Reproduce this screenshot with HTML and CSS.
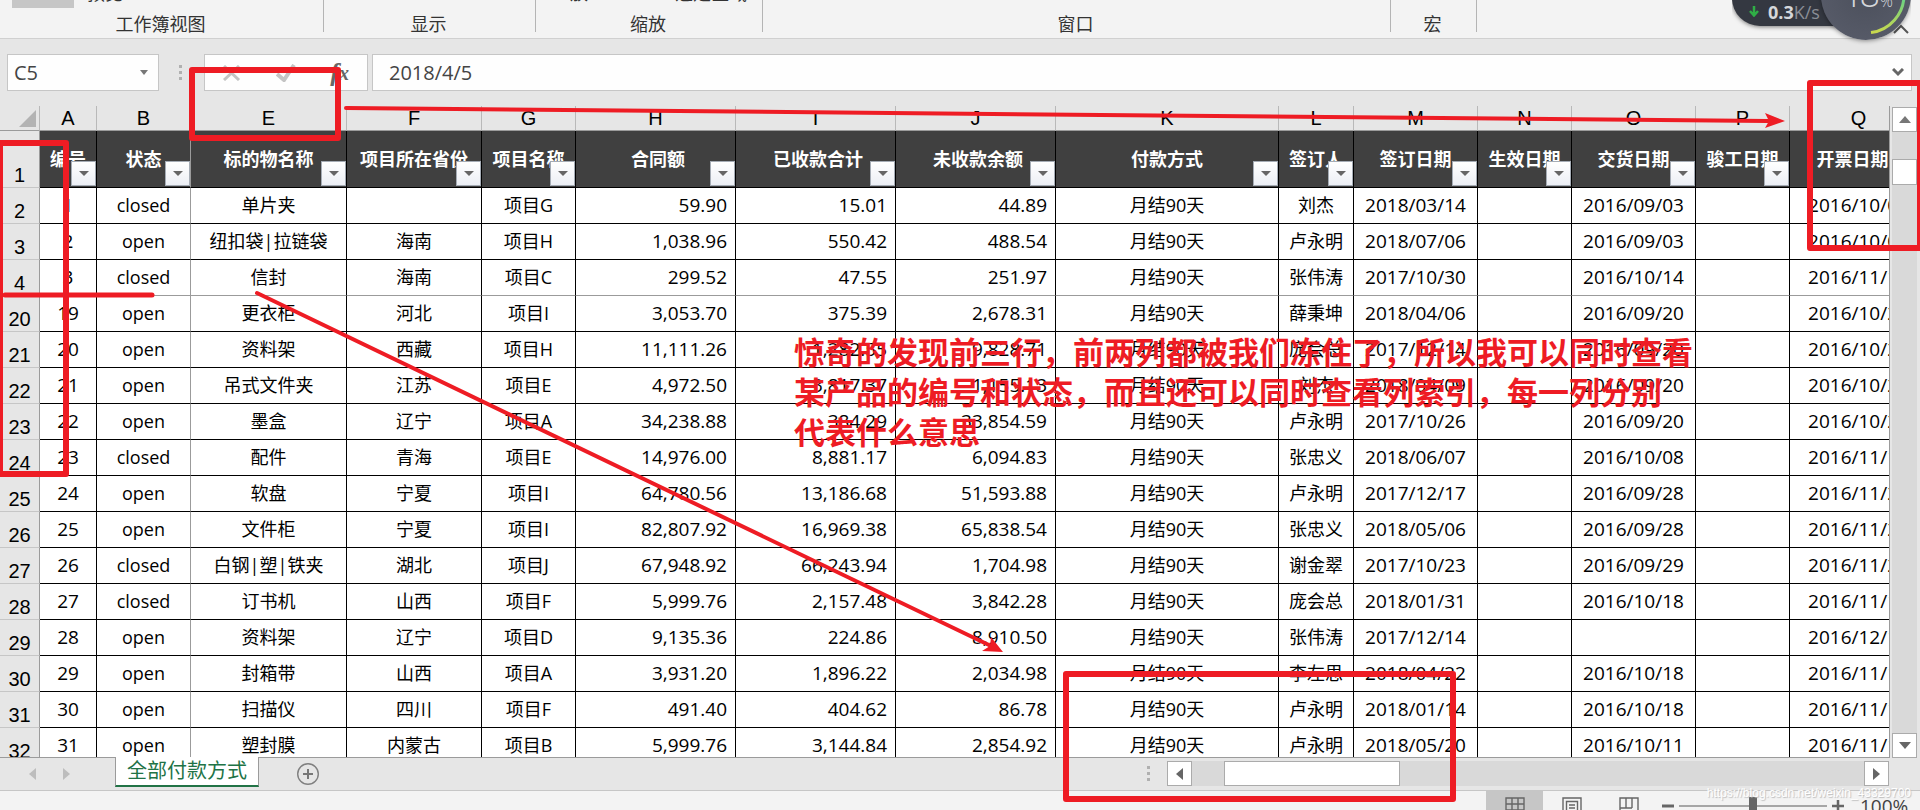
FILE: index.html
```html
<!DOCTYPE html>
<html lang="zh-CN">
<head>
<meta charset="utf-8">
<title>全部付款方式</title>
<link rel="stylesheet" href="styles.css">
</head>
<body>
<header class="ribbon">
  <section class="group views"><div class="cut"><i class="chip"></i><span>预览</span></div><h2>工作簿视图</h2></section>
  <section class="group show"><h2>显示</h2></section>
  <section class="group zoom"><div class="cut"><span>放</span><span>选定区域</span></div><h2>缩放</h2></section>
  <section class="group window"><h2>窗口</h2></section>
  <section class="group macro"><h2>宏</h2></section>
  <button class="collapse" aria-label="折叠功能区"><svg width="16" height="10" viewBox="0 0 16 10"><path d="M1 9 L8 2 L15 9" fill="none" stroke="#555" stroke-width="2"/></svg></button>
</header>

<div class="formula-bar">
  <div class="name-box">
    <input type="text" value="C5" aria-label="名称框">
    <button aria-label="名称列表"><svg width="8" height="5" viewBox="0 0 8 5"><path d="M0 0H8L4 5Z" fill="#777"/></svg></button>
  </div>
  <div class="dots"><i></i><i></i><i></i></div>
  <div class="fx-box">
    <button aria-label="取消"><svg width="18" height="16" viewBox="0 0 18 16"><path d="M1 1L16 15M16 1L1 15" stroke="#c4c4c4" stroke-width="3" fill="none"/></svg></button>
    <button aria-label="输入"><svg width="20" height="18" viewBox="0 0 20 18"><path d="M1 10L8 16L18 1" stroke="#c4c4c4" stroke-width="4" fill="none"/></svg></button>
    <button class="fx" aria-label="插入函数">f<small>x</small></button>
  </div>
  <div class="formula">
    <input type="text" value="2018/4/5" aria-label="编辑栏">
    <button aria-label="展开编辑栏"><svg width="12" height="9" viewBox="0 0 12 9"><path d="M1 1L6 6L11 1" stroke="#666" stroke-width="3" fill="none"/></svg></button>
  </div>
</div>

<main class="sheet">
  <div class="grid">
    <table>
      <colgroup><col class="w40"><col class="w57"><col class="w94"><col class="w156"><col class="w135"><col class="w94"><col class="w160"><col class="w160"><col class="w160"><col class="w223"><col class="w75"><col class="w124"><col class="w94"><col class="w124"><col class="w94"><col class="w138"></colgroup>
      <thead>
        <tr class="letters"><th class="corner"><svg width="17" height="17" viewBox="0 0 17 17"><path d="M17 0V17H0Z" fill="#b3b3b3"/></svg></th><th>A</th><th>B</th><th>E</th><th>F</th><th>G</th><th>H</th><th>I</th><th>J</th><th>K</th><th>L</th><th>M</th><th>N</th><th>O</th><th>P</th><th>Q</th></tr>
        <tr class="titles"><th class="rn">1</th>
          <th>编号<button class="filter" aria-label="筛选编号"></button></th>
          <th>状态<button class="filter" aria-label="筛选状态"></button></th>
          <th>标的物名称<button class="filter" aria-label="筛选标的物名称"></button></th>
          <th>项目所在省份<button class="filter" aria-label="筛选项目所在省份"></button></th>
          <th>项目名称<button class="filter" aria-label="筛选项目名称"></button></th>
          <th class="amount">合同额<button class="filter" aria-label="筛选合同额"></button></th>
          <th class="amount">已收款合计<button class="filter" aria-label="筛选已收款合计"></button></th>
          <th class="amount">未收款余额<button class="filter" aria-label="筛选未收款余额"></button></th>
          <th>付款方式<button class="filter" aria-label="筛选付款方式"></button></th>
          <th>签订人<button class="filter" aria-label="筛选签订人"></button></th>
          <th>签订日期<button class="filter" aria-label="筛选签订日期"></button></th>
          <th>生效日期<button class="filter" aria-label="筛选生效日期"></button></th>
          <th>交货日期<button class="filter" aria-label="筛选交货日期"></button></th>
          <th>骏工日期<button class="filter" aria-label="筛选骏工日期"></button></th>
          <th class="last">开票日期</th></tr>
      </thead>
      <tbody>
        <tr><th class="rn">2</th><td>1</td><td>closed</td><td>单片夹</td><td></td><td>项目G</td><td>59.90</td><td>15.01</td><td>44.89</td><td>月结90天</td><td>刘杰</td><td>2018/03/14</td><td></td><td>2016/09/03</td><td></td><td>2016/10/03</td></tr>
        <tr><th class="rn">3</th><td>2</td><td>open</td><td>纽扣袋|拉链袋</td><td>海南</td><td>项目H</td><td>1,038.96</td><td>550.42</td><td>488.54</td><td>月结90天</td><td>卢永明</td><td>2018/07/06</td><td></td><td>2016/09/03</td><td></td><td>2016/10/03</td></tr>
        <tr class="freeze"><th class="rn">4</th><td>3</td><td>closed</td><td>信封</td><td>海南</td><td>项目C</td><td>299.52</td><td>47.55</td><td>251.97</td><td>月结90天</td><td>张伟涛</td><td>2017/10/30</td><td></td><td>2016/10/14</td><td></td><td>2016/11/14</td></tr>
        <tr><th class="rn">20</th><td>19</td><td>open</td><td>更衣柜</td><td>河北</td><td>项目I</td><td>3,053.70</td><td>375.39</td><td>2,678.31</td><td>月结90天</td><td>薛秉坤</td><td>2018/04/06</td><td></td><td>2016/09/20</td><td></td><td>2016/10/20</td></tr>
        <tr><th class="rn">21</th><td>20</td><td>open</td><td>资料架</td><td>西藏</td><td>项目H</td><td>11,111.26</td><td>1,282.55</td><td>9,828.71</td><td>月结90天</td><td>庞会总</td><td>2017/12/14</td><td></td><td>2016/09/20</td><td></td><td>2016/10/20</td></tr>
        <tr><th class="rn">22</th><td>21</td><td>open</td><td>吊式文件夹</td><td>江苏</td><td>项目E</td><td>4,972.50</td><td>3,817.37</td><td>1,155.13</td><td>月结90天</td><td>刘杰</td><td>2018/04/09</td><td></td><td>2016/09/20</td><td></td><td>2016/10/20</td></tr>
        <tr><th class="rn">23</th><td>22</td><td>open</td><td>墨盒</td><td>辽宁</td><td>项目A</td><td>34,238.88</td><td>384.29</td><td>33,854.59</td><td>月结90天</td><td>卢永明</td><td>2017/10/26</td><td></td><td>2016/09/20</td><td></td><td>2016/10/20</td></tr>
        <tr><th class="rn">24</th><td>23</td><td>closed</td><td>配件</td><td>青海</td><td>项目E</td><td>14,976.00</td><td>8,881.17</td><td>6,094.83</td><td>月结90天</td><td>张忠义</td><td>2018/06/07</td><td></td><td>2016/10/08</td><td></td><td>2016/11/18</td></tr>
        <tr><th class="rn">25</th><td>24</td><td>open</td><td>软盘</td><td>宁夏</td><td>项目I</td><td>64,780.56</td><td>13,186.68</td><td>51,593.88</td><td>月结90天</td><td>卢永明</td><td>2017/12/17</td><td></td><td>2016/09/28</td><td></td><td>2016/11/28</td></tr>
        <tr><th class="rn">26</th><td>25</td><td>open</td><td>文件柜</td><td>宁夏</td><td>项目I</td><td>82,807.92</td><td>16,969.38</td><td>65,838.54</td><td>月结90天</td><td>张忠义</td><td>2018/05/06</td><td></td><td>2016/09/28</td><td></td><td>2016/11/28</td></tr>
        <tr><th class="rn">27</th><td>26</td><td>closed</td><td>白钢|塑|铁夹</td><td>湖北</td><td>项目J</td><td>67,948.92</td><td>66,243.94</td><td>1,704.98</td><td>月结90天</td><td>谢金翠</td><td>2017/10/23</td><td></td><td>2016/09/29</td><td></td><td>2016/11/29</td></tr>
        <tr><th class="rn">28</th><td>27</td><td>closed</td><td>订书机</td><td>山西</td><td>项目F</td><td>5,999.76</td><td>2,157.48</td><td>3,842.28</td><td>月结90天</td><td>庞会总</td><td>2018/01/31</td><td></td><td>2016/10/18</td><td></td><td>2016/11/18</td></tr>
        <tr><th class="rn">29</th><td>28</td><td>open</td><td>资料架</td><td>辽宁</td><td>项目D</td><td>9,135.36</td><td>224.86</td><td>8,910.50</td><td>月结90天</td><td>张伟涛</td><td>2017/12/14</td><td></td><td></td><td></td><td>2016/12/18</td></tr>
        <tr><th class="rn">30</th><td>29</td><td>open</td><td>封箱带</td><td>山西</td><td>项目A</td><td>3,931.20</td><td>1,896.22</td><td>2,034.98</td><td>月结90天</td><td>李左思</td><td>2018/04/22</td><td></td><td>2016/10/18</td><td></td><td>2016/11/18</td></tr>
        <tr><th class="rn">31</th><td>30</td><td>open</td><td>扫描仪</td><td>四川</td><td>项目F</td><td>491.40</td><td>404.62</td><td>86.78</td><td>月结90天</td><td>卢永明</td><td>2018/01/14</td><td></td><td>2016/10/18</td><td></td><td>2016/11/18</td></tr>
        <tr><th class="rn">32</th><td>31</td><td>open</td><td>塑封膜</td><td>内蒙古</td><td>项目B</td><td>5,999.76</td><td>3,144.84</td><td>2,854.92</td><td>月结90天</td><td>卢永明</td><td>2018/05/20</td><td></td><td>2016/10/11</td><td></td><td>2016/11/11</td></tr>
      </tbody>
    </table>
  </div>
  <div class="vscroll">
    <button class="sb" aria-label="向上滚动"><svg width="12" height="7" viewBox="0 0 12 7"><path d="M0 7H12L6 0Z" fill="#777"/></svg></button>
    <div class="vtrack"><div class="vthumb"></div></div>
    <button class="sb" aria-label="向下滚动"><svg width="12" height="7" viewBox="0 0 12 7"><path d="M0 0H12L6 7Z" fill="#666"/></svg></button>
  </div>
</main>

<nav class="tabs">
  <button class="nav" aria-label="上一个工作表"><svg width="7" height="12" viewBox="0 0 7 12"><path d="M7 0V12L0 6Z" fill="#bdbdbd"/></svg></button>
  <button class="nav" aria-label="下一个工作表"><svg width="7" height="12" viewBox="0 0 7 12"><path d="M0 0V12L7 6Z" fill="#bdbdbd"/></svg></button>
  <button class="tab">全部付款方式</button>
  <button class="add" aria-label="新建工作表"><svg width="24" height="24" viewBox="0 0 24 24"><circle cx="12" cy="12" r="10.3" fill="none" stroke="#808080" stroke-width="1.4"/><path d="M12 7V17M7 12H17" stroke="#777" stroke-width="2"/></svg></button>
  <div class="hscroll">
    <div class="dots"><i></i><i></i><i></i></div>
    <button class="sb" aria-label="向左滚动"><svg width="7" height="12" viewBox="0 0 7 12"><path d="M7 0V12L0 6Z" fill="#666"/></svg></button>
    <div class="htrack"><div class="hthumb"></div></div>
    <button class="sb" aria-label="向右滚动"><svg width="7" height="12" viewBox="0 0 7 12"><path d="M0 0V12L7 6Z" fill="#666"/></svg></button>
  </div>
</nav>

<footer class="status">
  <button class="view active" aria-label="普通"><svg width="20" height="14" viewBox="0 0 20 14"><path d="M1 1H19V13H1ZM1 7H19M7 1V13M13 1V13" fill="none" stroke="#666" stroke-width="1.4"/></svg></button>
  <button class="view" aria-label="页面布局"><svg width="20" height="18" viewBox="0 0 20 18"><path d="M1 18V1H19V18M4.500 18V4.500H15.500V18M7 8H13M7 11H13M7 14H13" fill="none" stroke="#666" stroke-width="1.4"/></svg></button>
  <button class="view" aria-label="分页预览"><svg width="20" height="18" viewBox="0 0 20 18"><path d="M1 18V1H19V18M7 1V11M13 1V11M1 11H13" fill="none" stroke="#666" stroke-width="1.4"/></svg></button>
  <button class="step" aria-label="缩小"><svg width="12" height="12" viewBox="0 0 12 12"><path d="M0 6H12" stroke="#666" stroke-width="3"/></svg></button>
  <input class="slider" type="range" min="0" max="100" value="50" aria-label="显示比例">
  <button class="step" aria-label="放大"><svg width="12" height="12" viewBox="0 0 12 12"><path d="M0 6H12M6 0V12" stroke="#666" stroke-width="2.500"/></svg></button>
  <span class="percent">100%</span>
</footer>

<aside class="meter">
  <div class="pill"><svg width="10" height="11" viewBox="0 0 10 11"><path d="M5 0V9M1 5L5 9.500L9 5" fill="none" stroke="#2fae46" stroke-width="2.500"/></svg><b>0.3</b><span>K/s</span></div>
  <div class="ball"><span class="load">48<small>%</small></span><svg class="arc" width="90" height="90" viewBox="0 0 90 90"><defs><linearGradient id="arc" x1="0" y1="1" x2="0" y2="0"><stop offset="0" stop-color="#c9d84e"/><stop offset="1" stop-color="#5fd08a"/></linearGradient></defs><path d="M50 82.600A38 38 0 0 0 83 45" fill="none" stroke="url(#arc)" stroke-width="3"/></svg></div>
</aside>

<svg class="marks" width="1926" height="810" viewBox="0 0 1926 810">
  <g fill="none" stroke="#ee1c24" stroke-width="6" stroke-linejoin="round" stroke-linecap="round">
    <rect x="192" y="70" width="146" height="68"/>
    <rect x="0" y="143" width="66" height="331"/>
    <rect x="1810" y="83" width="110" height="165"/>
    <rect x="1066" y="674" width="387" height="125"/>
    <path d="M5 295H152" stroke-width="5"/>
    <path d="M346 108L1768 121" stroke-width="4"/>
    <path d="M257 293L991 646" stroke-width="4"/>
  </g>
  <path d="M1785 121L1765 113L1769 121L1765 128Z" fill="#ee1c24"/>
  <path d="M1003 652L991 637L990 646L982 651Z" fill="#ee1c24"/>
</svg>
<p class="note">惊奇的发现前三行，前两列都被我们冻住了，所以我可以同时查看<br>某产品的编号和状态，而且还可以同时查看列索引，每一列分别<br>代表什么意思</p>
<div class="watermark">https://blog.csdn.net/weixin_43329700</div>
</body>
</html>
```

FILE: styles.css
```css
* { box-sizing: border-box; }
body {
  margin: 0;
  height: 100vh;
  display: flex;
  flex-direction: column;
  overflow: hidden;
  position: relative;
  background: #e6e6e6;
  color: #000;
  font: 18px/24px "Open Sans", "Noto Sans CJK SC", sans-serif;
}
button, input { font: inherit; color: inherit; margin: 0; padding: 0; border: 0; background: none; border-radius: 0; }
button { display: flex; align-items: center; justify-content: center; }
svg { display: block; flex: none; }

.ribbon { display: flex; height: 39px; flex: none; background: #f3f3f3; border-bottom: 1px solid #d0d0d0; color: #333; }
.group { position: relative; height: 32px; border-right: 1px solid #b4b4b4; flex: none; }
.group h2 { margin: 0; padding: 12px 2px 0 0; font-size: 18px; line-height: 24px; font-weight: 400; text-align: center; }
.views { width: 324px; }
.show { width: 212px; }
.zoom { width: 227px; }
.window { width: 628px; }
.macro { width: 86px; }
.cut { position: absolute; top: 0; left: 0; right: 0; height: 3px; display: flex; align-items: flex-end; }
.cut span { height: 22px; }
.views .cut { padding-left: 12px; gap: 13px; }
.chip { width: 62px; height: 8px; background: #c6c6c6; align-self: flex-start; }
.zoom .cut { padding-left: 34px; gap: 87px; }
.collapse { margin-left: auto; padding: 20px 11px 0 0; }

.formula-bar { display: flex; align-items: center; flex: none; height: 67px; padding: 0 8px 0 7px; color: #444; }
.formula-bar > div:not(.dots) { display: flex; align-items: center; height: 37px; border: 1px solid #c6c6c6; background: #fefefe; }
.name-box { width: 152px; padding: 0 10px 0 6px; }
.name-box input { flex: 1; min-width: 0; font-size: 20px; }
.dots { display: flex; flex-direction: column; gap: 3px; }
.dots i { width: 3px; height: 3px; background: #b0b0b0; }
.formula-bar .dots { margin: 0 22px 0 20px; }
.fx-box { width: 164px; padding: 0 18px; justify-content: space-between; }
.fx { font: italic bold 26px/30px "Liberation Serif", serif; color: #666; }
.fx small { font-size: 20px; }
.formula { flex: 1; margin-left: 4px; padding: 0 7px 0 16px; }
.formula input { flex: 1; min-width: 0; font-size: 20px; }

.sheet { display: flex; flex: 1; min-height: 0; }
.grid { flex: 1; min-width: 0; overflow: hidden; border-right: 1px solid #9b9b9b; border-bottom: 1px solid #9b9b9b; }
table { width: 1928px; table-layout: fixed; border-collapse: separate; border-spacing: 0; background: #fff; }
.w40 { width: 40px; } .w57 { width: 57px; } .w75 { width: 75px; } .w94 { width: 94px; }
.w124 { width: 124px; } .w135 { width: 135px; } .w138 { width: 138px; } .w156 { width: 156px; }
.w160 { width: 160px; } .w223 { width: 223px; }
th, td { padding: 0; height: 36px; text-align: center; white-space: nowrap; overflow: hidden; border-right: 1px solid #000; border-bottom: 1px solid #000; }
td { padding-bottom: 2px; }
td:nth-child(2), td:nth-child(n+12), td:nth-child(7), td:nth-child(8), td:nth-child(9) { font-size: 19px; }
td:nth-child(7), td:nth-child(8), td:nth-child(9) { text-align: right; padding-right: 8px; }
tr > :nth-child(3) { border-right-color: #9b9b9b; }
.freeze td { border-bottom-color: #9b9b9b; }
.letters th { height: 25px; font: 20px/24px "Liberation Sans", sans-serif; background: #e6e6e6; border-bottom-color: #9b9b9b; border-right-color: #b9b9b9; }
.letters .corner svg { margin: 0 3px 0 auto; }
.rn { font: 20px/20px "Liberation Sans", sans-serif; background: #e6e6e6; vertical-align: bottom; padding-bottom: 2px; border-right-color: #9b9b9b; border-bottom-color: #c6c6c6; }
.titles th { height: 57px; position: relative; }
.titles th:not(.rn) { background: #404040; color: #fff; font-weight: 700; }
.titles .amount { padding-left: 5px; }
.titles .last { padding-right: 12px; }
.filter { position: absolute; right: 0; bottom: 1px; width: 25px; height: 25px; border: 1px solid #a5acb5; background: linear-gradient(#fff, #eceff5); }
.filter::after { content: ""; border: 5px solid transparent; border-top-color: #666; border-bottom: 0; }

.vscroll { display: flex; flex-direction: column; width: 30px; padding: 1px 4px 0 2px; }
.sb { flex: none; width: 25px; height: 25px; background: #fff; border: 1px solid #ababab; }
.vtrack { flex: 1; width: 25px; padding-top: 27px; background: #d9d9d9; }
.vthumb { height: 26px; background: #fff; border: 1px solid #ababab; }

.tabs { display: flex; flex: none; height: 33px; border-bottom: 1px solid #c6c6c6; padding-left: 28px; align-items: flex-start; }
.nav { width: 8px; height: 32px; margin-right: 26px; }
.tab { width: 144px; height: 30px; margin-left: 19px; margin-top: -1px; background: #fff; color: #217346; font-size: 20px; line-height: 24px; border: solid #9b9b9b; border-width: 0 1px; border-bottom: 2px solid #217346; }
.add { width: 24px; height: 32px; margin-left: 37px; }
.hscroll { margin-left: auto; margin-right: 31px; width: 742px; height: 31px; display: flex; align-items: center; }
.hscroll .dots { margin-right: 17px; }
.htrack { flex: 1; height: 25px; padding-left: 32px; background: #d9d9d9; }
.hthumb { width: 176px; height: 25px; background: #fff; border: 1px solid #ababab; }

.status { display: flex; flex: none; height: 19px; justify-content: flex-end; background: #f3f3f3; color: #444; overflow: hidden; }
.view { width: 57px; height: 32px; align-items: flex-start; padding-top: 6px; }
.view.active { background: #c6c6c6; }
.step { width: 12px; height: 30px; }
.view + .step { margin-left: 5px; }
.slider { appearance: none; width: 148px; height: 30px; margin: 0 5px; background: linear-gradient(#a6a6a6, #a6a6a6) center / 100% 2px no-repeat; }
.slider::-webkit-slider-thumb { appearance: none; width: 8px; height: 18px; background: #666; }
.percent { width: 60px; margin-left: 16px; line-height: 30px; font-size: 19px; }

.meter { position: absolute; top: 0; right: 9px; width: 179px; height: 60px; overflow: hidden; color: #d5d7db; }
.pill { position: absolute; left: 0; top: -30px; width: 150px; height: 56px; padding: 27px 0 0 17px; display: flex; align-items: center; border-radius: 28px; background: #343841; box-shadow: 0 1px 4px rgba(0,0,0,.5); }
.pill b { margin-left: 9px; }
.pill span { color: #8a8e96; }
.ball { position: absolute; right: 0; top: -50px; width: 90px; height: 90px; border-radius: 50%; background: radial-gradient(#4c505c, #5a5e6c); box-shadow: 0 1px 4px rgba(0,0,0,.4); }
.load { position: absolute; left: 18px; top: 26px; font-size: 36px; line-height: 36px; font-weight: 300; white-space: nowrap; }
.load small { font-size: 16px; }

.marks { position: absolute; left: 0; top: 0; pointer-events: none; }
.note { position: absolute; left: 794px; top: 331px; margin: 0; color: #ee1c24; font: bold 31px/40px "Noto Sans CJK SC", sans-serif; white-space: nowrap; }
.watermark { position: absolute; right: 9px; bottom: 9px; font: 12px/16px "Liberation Sans", sans-serif; color: #fff; text-shadow: 1px 1px 1px #bbb; }
```
